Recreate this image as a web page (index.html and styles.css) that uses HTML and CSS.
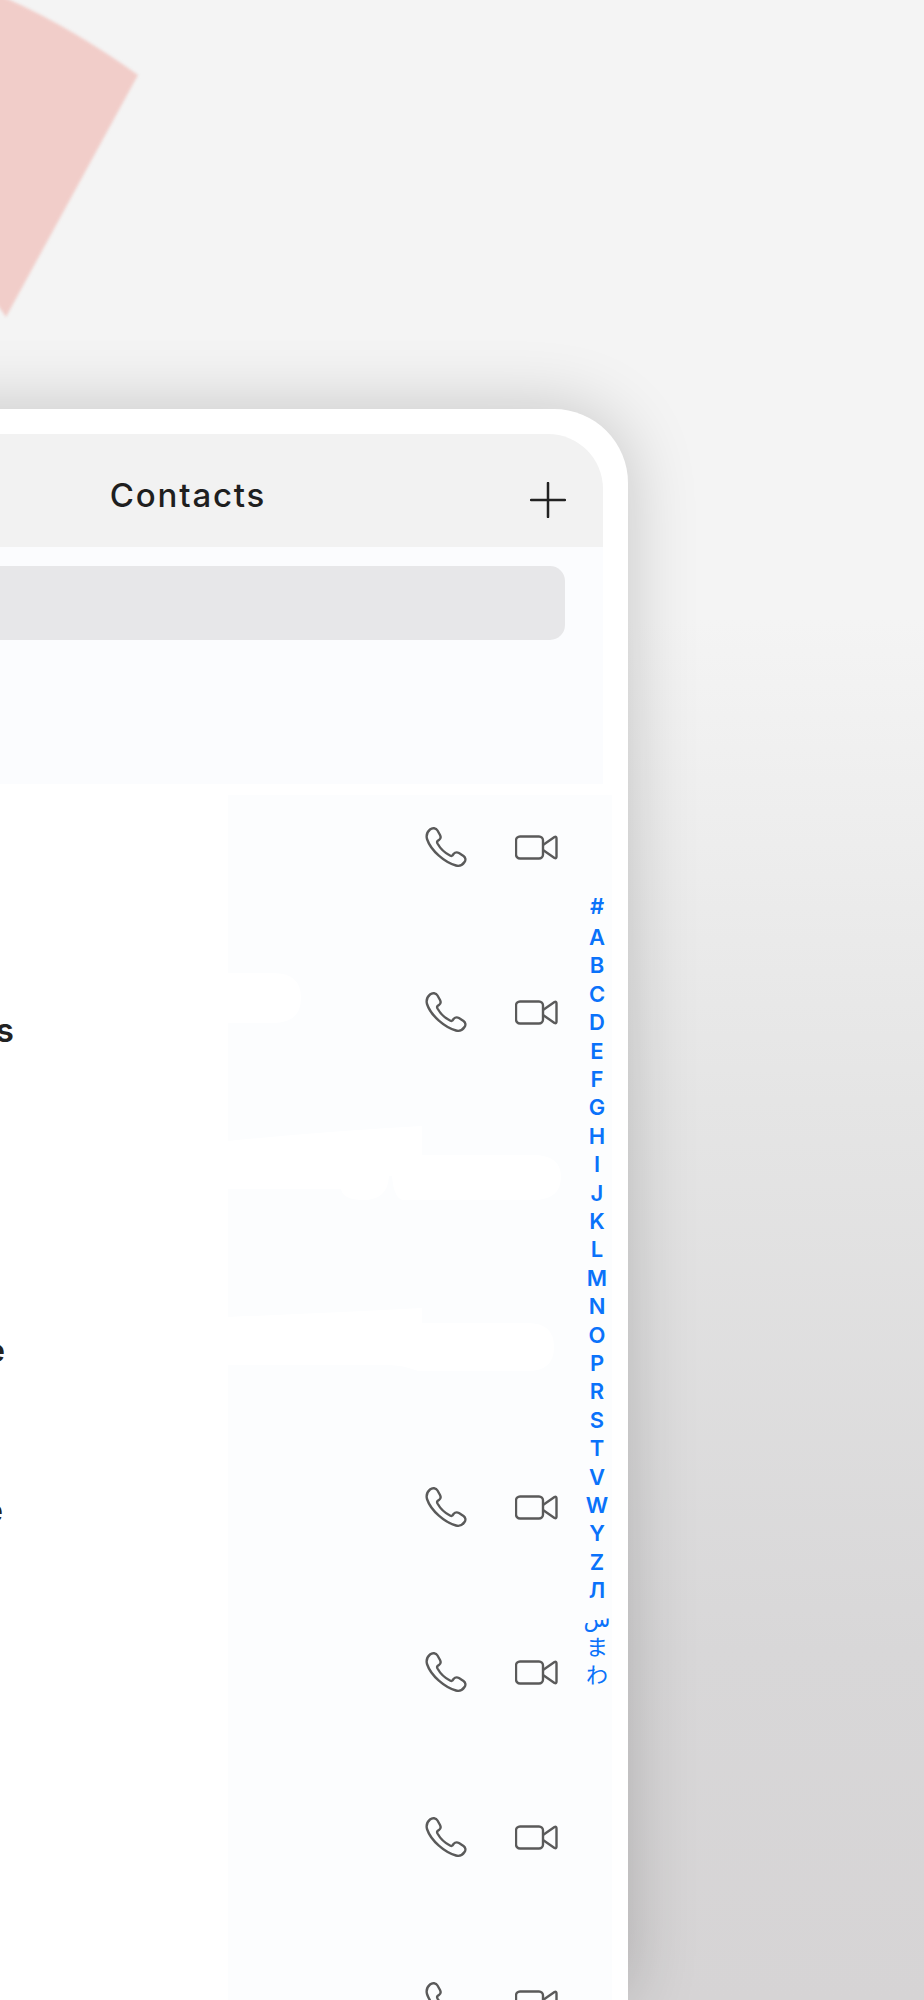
FILE: index.html
```html
<!DOCTYPE html>
<html lang="en">
<head>
    <meta charset="UTF-8">
    <meta name="viewport" content="width=device-width, initial-scale=1.0">
    <title>Contacts</title>
    <link rel="stylesheet" href="styles.css">
</head>
<body>
    <!-- Pink shape behind the phone -->
    <svg class="backdrop-shape" width="170" height="350" viewBox="-20 -20 170 350">
        <path d="M-20 -12 L10 0 Q72 28 138 75 L6 317 L-20 280 Z" fill="#f1cdc9"/>
    </svg>

    <div class="device">
        <div class="screen">
            <div class="top-bar">
                <span class="top-bar-spacer"></span>
                <h1 class="top-bar-title">Contacts</h1>
                <svg class="add-icon" width="36" height="36" viewBox="0 0 36 36">
                    <path d="M18 1 V35 M1 18 H35" fill="none" stroke="#222" stroke-width="2.5" stroke-linecap="round"/>
                </svg>
            </div>

            <div class="search-panel">
                <div class="search-box"></div>
            </div>

            <div class="contact-list">
                <div class="contact-row">
                    <div class="contact-name"></div>
                    <div class="contact-actions">
                        <svg class="phone-icon" width="42" height="41" viewBox="0 0 42 41"><use href="#phone"/></svg>
                        <svg class="video-icon" width="43" height="25" viewBox="0 0 43 25"><use href="#video"/></svg>
                    </div>
                </div>
                <div class="contact-row">
                    <div class="contact-name name-s">s</div>
                    <div class="contact-actions">
                        <svg class="phone-icon" width="42" height="41" viewBox="0 0 42 41"><use href="#phone"/></svg>
                        <svg class="video-icon" width="43" height="25" viewBox="0 0 43 25"><use href="#video"/></svg>
                    </div>
                </div>
                <div class="contact-row">
                    <div class="contact-name"></div>
                    <div class="contact-actions"></div>
                </div>
                <div class="contact-row">
                    <div class="contact-name name-e">e</div>
                    <div class="contact-actions"></div>
                </div>
                <div class="contact-row">
                    <div class="contact-name name-e2">e</div>
                    <div class="contact-actions">
                        <svg class="phone-icon" width="42" height="41" viewBox="0 0 42 41"><use href="#phone"/></svg>
                        <svg class="video-icon" width="43" height="25" viewBox="0 0 43 25"><use href="#video"/></svg>
                    </div>
                </div>
                <div class="contact-row">
                    <div class="contact-name"></div>
                    <div class="contact-actions">
                        <svg class="phone-icon" width="42" height="41" viewBox="0 0 42 41"><use href="#phone"/></svg>
                        <svg class="video-icon" width="43" height="25" viewBox="0 0 43 25"><use href="#video"/></svg>
                    </div>
                </div>
                <div class="contact-row">
                    <div class="contact-name"></div>
                    <div class="contact-actions">
                        <svg class="phone-icon" width="42" height="41" viewBox="0 0 42 41"><use href="#phone"/></svg>
                        <svg class="video-icon" width="43" height="25" viewBox="0 0 43 25"><use href="#video"/></svg>
                    </div>
                </div>
                <div class="contact-row">
                    <div class="contact-name"></div>
                    <div class="contact-actions">
                        <svg class="phone-icon" width="42" height="41" viewBox="0 0 42 41"><use href="#phone"/></svg>
                        <svg class="video-icon" width="43" height="25" viewBox="0 0 43 25"><use href="#video"/></svg>
                    </div>
                </div>

                <!-- White patches lying over the tinted column -->
                <svg class="list-patches" width="400" height="420" viewBox="0 0 400 420">
                    <path d="M0 0 H45 Q73 0 73 25 Q73 50 45 50 H0 Z"/>
                    <path d="M0 168 Q100 158 194 153 V182 H305 Q333 182 333 204 Q333 227 305 227 H176 Q166 227 164 203 H161 Q160 227 135 227 Q115 227 113 216 H0 Z"/>
                    <path d="M0 344 Q100 340 194 335 V350 H300 Q326 350 326 374 Q326 398 300 398 H190 Q175 392 160 392 H0 Z"/>
                </svg>
            </div>

            <ul class="alpha-index">
                <li class="alpha-hash">#</li><li>A</li><li>B</li><li>C</li><li>D</li><li>E</li><li>F</li>
                <li>G</li><li>H</li><li>I</li><li>J</li><li>K</li><li>L</li><li>M</li>
                <li>N</li><li>O</li><li>P</li><li>R</li><li>S</li><li>T</li><li>V</li>
                <li>W</li><li>Y</li><li>Z</li><li>Л</li><li class="alpha-script">س</li><li class="alpha-script">ま</li><li class="alpha-script">わ</li>
            </ul>
        </div>
    </div>

    <!-- Icon shapes used by every row -->
    <svg class="icon-defs" width="0" height="0">
        <symbol id="phone" viewBox="0 0 42 41">
            <path d="M5 2.5 C7.5 0.5 11 1 12.5 3.5 L15 8 C16 10 15.5 12 14 13 L12.5 14 C12 14.5 12 15.5 12.5 16.5 C15 21 20 26 25 28.5 C26 29 27 29 27.5 28.5 L28.5 27 C30 25.3 32 25 34 26 L38.5 29 C40.5 30.5 41 33 39.5 35 C37.5 38 34.5 39.5 31 38.5 C20 35.5 6 24 2 12 C1 8 2 5 5 2.5 Z" fill="none" stroke="#5a5a5a" stroke-width="2.4"/>
        </symbol>
        <symbol id="video" viewBox="0 0 43 25">
            <rect x="1" y="1.5" width="27" height="22" rx="4" fill="none" stroke="#5a5a5a" stroke-width="2.4"/>
            <path d="M28 10 L39.5 2 Q41.5 1 41.5 3.5 V21.5 Q41.5 24 39.5 23 L28 15" fill="none" stroke="#5a5a5a" stroke-width="2.4" stroke-linejoin="round"/>
        </symbol>
    </svg>
</body>
</html>
```

FILE: styles.css
```css
html,
body {
    height: 2000px;
    margin: 0;
    padding: 0;
    overflow: hidden;
}

body {
    font-family: Inter, "DejaVu Sans", "Noto Sans CJK JP", sans-serif;
    background: linear-gradient(#f4f4f4 0, #f4f4f4 620px, #e5e5e5 1100px, #d8d7d8 1650px, #d6d4d5 2000px);
    position: relative;
}

.backdrop-shape {
    position: absolute;
    top: -20px;
    left: -20px;
    filter: blur(1.5px);
}

.icon-defs {
    position: absolute;
}

/* Phone frame, runs off the left and bottom of the picture */
.device {
    width: 880px;
    height: 1591px;
    margin-left: -252px;
    position: relative;
    top: 409px;
    box-sizing: border-box;
    padding: 25px 25px 0;
    background-color: #fff;
    border-radius: 74px 74px 0 0;
    box-shadow: 0 0 70px rgba(0, 0, 0, 0.2);
}

.screen {
    position: relative;
    height: 1566px;
    border-radius: 55px 55px 0 0;
}

.top-bar {
    height: 113px;
    padding: 0 37px;
    display: flex;
    justify-content: space-between;
    align-items: center;
    background-color: #f2f2f2;
    border-radius: 55px 55px 0 0;
}

.top-bar-spacer {
    width: 36px;
}

.top-bar-title {
    margin: 0 0 -9px;
    font-size: 33px;
    font-weight: 500;
    letter-spacing: 1.8px;
    color: #1f1f1f;
}

.add-icon {
    margin-top: 18px;
}

.search-panel {
    height: 237px;
    box-sizing: border-box;
    padding: 19px 38px 0;
    background-color: #fbfcfe;
}

.search-box {
    height: 74px;
    background-color: #e7e7e9;
    border-radius: 15px;
}

.contact-list {
    position: relative;
    height: 1205px;
    overflow: hidden;
    margin-top: 11px;
    margin-right: -9px;
}

.contact-row {
    display: flex;
    height: 165px;
}

.contact-name {
    width: 455px;
    box-sizing: border-box;
    padding-right: 214px;
    text-align: right;
    font-size: 33px;
    font-weight: 600;
    line-height: 40px;
    color: #222;
}

.name-s {
    margin-top: 50px;
}

.name-e {
    margin-top: 40px;
    padding-right: 223px;
}

.name-e2 {
    margin-top: 35px;
    padding-right: 225px;
}

.contact-actions {
    flex: 1;
    display: flex;
    align-items: flex-start;
    gap: 48px;
    padding: 32px 0 0 197px;
    background-color: #fcfdfe;
}

.video-icon {
    margin-top: 8px;
}

.list-patches {
    position: absolute;
    top: 178px;
    left: 455px;
    fill: #fff;
}

/* Quick index down the right edge */
.alpha-index {
    position: absolute;
    top: 458px;
    right: -9px;
    width: 30px;
    margin: 0;
    padding: 0;
    list-style: none;
    text-align: center;
    font-size: 22px;
    font-weight: 600;
    line-height: 28.4px;
    color: #0a72fa;
}

.alpha-hash {
    margin-bottom: 2.5px;
}

.alpha-script {
    font-weight: 400;
}
```
